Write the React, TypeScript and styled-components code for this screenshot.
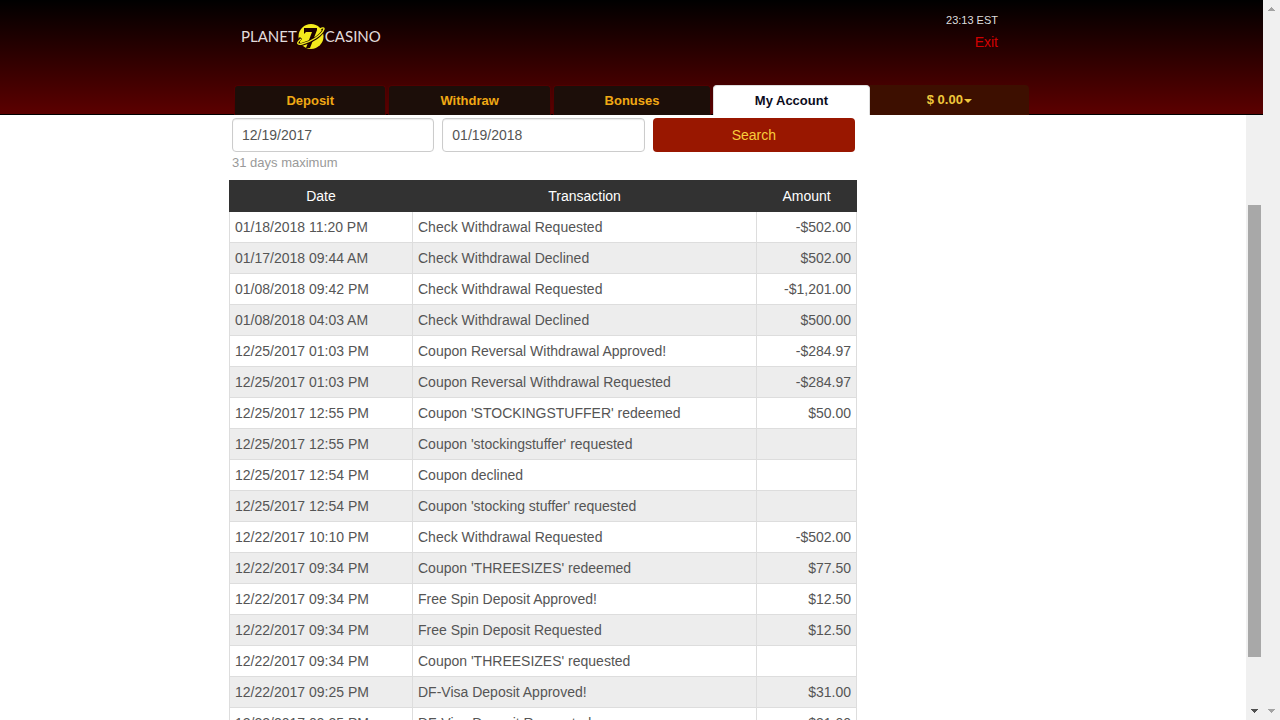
import React, { useState } from "react";
import styled, { createGlobalStyle } from "styled-components";

const GlobalStyle = createGlobalStyle`
  *, *::before, *::after { box-sizing: border-box; }
  body {
    margin: 0;
    background: #fff;
    color: #555;
    font-family: Arial, "Liberation Sans", sans-serif;
    font-size: 14px;
    line-height: 20px;
  }
`;

const Page = styled.div`
  display: flex;
  height: 100vh;
  overflow: hidden;
`;

const Frame = styled.div`
  display: flex;
  flex: 1;
  flex-direction: column;
  min-width: 0;
`;

const Header = styled.header`
  background: linear-gradient(#000, #5c0000);
  border-bottom: 1px solid #000;
`;

const HeaderInner = styled.div`
  max-width: 805px;
  margin: 0 auto;
`;

const TopRow = styled.div`
  display: flex;
  justify-content: space-between;
  height: 85px;
  padding: 10px 36px 0 12px;
`;

const Brand = styled.div`
  display: flex;
  align-items: center;
  height: 52px;
  color: #e2dcdc;
  font-family: Lato, sans-serif;
  font-size: 15px;
`;

const Globe = styled.svg`
  display: block;
  width: 30px;
  height: 28px;
  margin: 0 -1px;
`;

const Status = styled.div`
  text-align: right;
`;

const Clock = styled.div`
  color: #ddd;
  font-size: 11px;
`;

const ExitLink = styled.a`
  display: block;
  margin-top: 2px;
  color: #d00000;
  text-decoration: none;
`;

const Tabs = styled.nav`
  display: flex;
  gap: 2px;
  height: 30px;
  margin-bottom: -1px;
  padding: 0 5px;
`;

const Tab = styled.a<{ $grow: number; $active?: boolean }>`
  flex: ${(p) => p.$grow} 1 0;
  border: 1px solid ${(p) => (p.$active ? "#ddd" : "#500000")};
  border-bottom: 0;
  border-radius: 4px 4px 0 0;
  background: ${(p) => (p.$active ? "#fff" : "#1c0e09")};
  color: ${(p) => (p.$active ? "#0b0b1c" : "#f0a814")};
  font-size: 13px;
  font-weight: bold;
  line-height: 30px;
  text-align: center;
  text-decoration: none;
`;

const Balance = styled.button`
  display: flex;
  flex: 161 1 0;
  align-items: center;
  justify-content: center;
  gap: 1px;
  margin-left: -2px;
  padding: 0 0 2px;
  border: 0;
  border-radius: 0 4px 0 0;
  background: #3d0f00;
  color: #f0c83c;
  font: bold 13px Arial, "Liberation Sans", sans-serif;
`;

const Caret = styled.span`
  margin-top: 3px;
  border: 4px solid transparent;
  border-top-color: currentColor;
  border-bottom: 0;
`;

const Body = styled.div`
  display: flex;
  flex: 1;
  min-height: 0;
`;

const Scroller = styled.main`
  flex: 1;
  min-width: 0;
  overflow: hidden;
`;

const Content = styled.div`
  max-width: 788px;
  margin: 0 auto;
`;

const History = styled.section`
  max-width: 628px;
`;

const Filters = styled.form`
  display: grid;
  grid-template-columns: repeat(3, 1fr);
  column-gap: 8px;
  row-gap: 1px;
  padding: 3px 2px 7px 3px;
`;

const DateInput = styled.input`
  width: 100%;
  height: 34px;
  padding: 6px 9px;
  border: 1px solid #ccc;
  border-radius: 4px;
  background: #fff;
  box-shadow: inset 0 1px 1px rgba(0, 0, 0, 0.08);
  color: #555;
  font: 14px Arial, "Liberation Sans", sans-serif;
`;

const SearchButton = styled.button`
  height: 34px;
  border: 0;
  border-radius: 4px;
  background: #991700;
  color: #f8cc3c;
  font: 14px Arial, "Liberation Sans", sans-serif;
`;

const Hint = styled.p`
  grid-column: 1 / -1;
  margin: 0;
  color: #999;
  font-size: 13px;
`;

const Table = styled.table`
  width: 100%;
  border-collapse: collapse;
  table-layout: fixed;
`;

const HeadCell = styled.th<{ $width?: number }>`
  width: ${(p) => (p.$width ? `${p.$width}px` : "auto")};
  height: 31px;
  padding: 5px;
  border: 1px solid #323232;
  background: #323232;
  color: #fff;
  font-weight: normal;
`;

const Row = styled.tr`
  &:nth-child(even) { background: #ededed; }
`;

const Cell = styled.td<{ $right?: boolean }>`
  height: 31px;
  padding: 5px;
  border: 1px solid #ddd;
  text-align: ${(p) => (p.$right ? "right" : "left")};
  white-space: nowrap;
`;

const Track = styled.div<{ $thumb?: boolean }>`
  display: flex;
  flex: 0 0 17px;
  flex-direction: column;
  align-items: center;
  justify-content: space-between;
  padding: ${(p) => (p.$thumb ? "90px 0 7px" : "7px 0")};
  background: #f0f0f0;
`;

const Thumb = styled.div`
  flex: 0 0 89%;
  width: 13px;
  background: #a8a8a8;
`;

const Arrow = styled.svg<{ $dark?: boolean }>`
  display: block;
  width: 7px;
  height: 4px;
  fill: ${(p) => (p.$dark ? "#505050" : "#a3a3a3")};
  shape-rendering: crispEdges;
`;

const tabs = [
  { label: "Deposit", grow: 152 },
  { label: "Withdraw", grow: 162 },
  { label: "Bonuses", grow: 158 },
  { label: "My Account", grow: 156, active: true },
];

const rows: [string, string, string][] = [
  ["01/18/2018 11:20 PM", "Check Withdrawal Requested", "-$502.00"],
  ["01/17/2018 09:44 AM", "Check Withdrawal Declined", "$502.00"],
  ["01/08/2018 09:42 PM", "Check Withdrawal Requested", "-$1,201.00"],
  ["01/08/2018 04:03 AM", "Check Withdrawal Declined", "$500.00"],
  ["12/25/2017 01:03 PM", "Coupon Reversal Withdrawal Approved!", "-$284.97"],
  ["12/25/2017 01:03 PM", "Coupon Reversal Withdrawal Requested", "-$284.97"],
  ["12/25/2017 12:55 PM", "Coupon 'STOCKINGSTUFFER' redeemed", "$50.00"],
  ["12/25/2017 12:55 PM", "Coupon 'stockingstuffer' requested", ""],
  ["12/25/2017 12:54 PM", "Coupon declined", ""],
  ["12/25/2017 12:54 PM", "Coupon 'stocking stuffer' requested", ""],
  ["12/22/2017 10:10 PM", "Check Withdrawal Requested", "-$502.00"],
  ["12/22/2017 09:34 PM", "Coupon 'THREESIZES' redeemed", "$77.50"],
  ["12/22/2017 09:34 PM", "Free Spin Deposit Approved!", "$12.50"],
  ["12/22/2017 09:34 PM", "Free Spin Deposit Requested", "$12.50"],
  ["12/22/2017 09:34 PM", "Coupon 'THREESIZES' requested", ""],
  ["12/22/2017 09:25 PM", "DF-Visa Deposit Approved!", "$31.00"],
  ["12/22/2017 09:25 PM", "DF-Visa Deposit Requested", "$31.00"],
];

function ScrollArrow({ up, dark }: { up?: boolean; dark?: boolean }) {
  return (
    <Arrow viewBox="0 0 7 4" $dark={dark} aria-hidden="true">
      <path d={up ? "M0 4V3h1V2h1V1h1V0h1v1h1v1h1v1h1v1z" : "M0 0v1h1v1h1v1h1v1h1V3h1V2h1V1h1V0z"} />
    </Arrow>
  );
}

function Logo() {
  return (
    <Brand>
      <span>PLANET</span>
      <Globe viewBox="0 0 30 28" aria-hidden="true">
        <circle cx="15" cy="14.5" r="12.5" fill="#f3ea1c" />
        <path d="M8 6h13v2l-7 18h-4l6-16h-6l-2 2z" fill="#1a0000" />
        <path d="M5 16C0 21 1 24 7 22c9-2 19-9 21-15" fill="none" stroke="#1a0000" strokeWidth="3" />
        <path d="M5 17C0 21 1 23 6 22 15 20 26 13 28 7c0-2-2-1-4 0" fill="none" stroke="#f3ea1c" strokeWidth="1.4" />
      </Globe>
      <span>CASINO</span>
    </Brand>
  );
}

export default function App() {
  const [from, setFrom] = useState("12/19/2017");
  const [to, setTo] = useState("01/19/2018");
  return (
    <Page>
      <GlobalStyle />
      <Frame>
        <Header>
          <HeaderInner>
            <TopRow>
              <Logo />
              <Status>
                <Clock>23:13 EST</Clock>
                <ExitLink href="#exit">Exit</ExitLink>
              </Status>
            </TopRow>
            <Tabs>
              {tabs.map((t) => (
                <Tab key={t.label} href="#" $grow={t.grow} $active={t.active}>{t.label}</Tab>
              ))}
              <Balance type="button">$ 0.00<Caret /></Balance>
            </Tabs>
          </HeaderInner>
        </Header>
        <Body>
          <Scroller>
            <Content>
              <History>
                <Filters onSubmit={(e) => e.preventDefault()}>
                  <DateInput aria-label="From date" value={from} onChange={(e) => setFrom(e.target.value)} />
                  <DateInput aria-label="To date" value={to} onChange={(e) => setTo(e.target.value)} />
                  <SearchButton type="submit">Search</SearchButton>
                  <Hint>31 days maximum</Hint>
                </Filters>
                <Table>
                  <thead>
                    <tr>
                      <HeadCell $width={183}>Date</HeadCell>
                      <HeadCell>Transaction</HeadCell>
                      <HeadCell $width={100}>Amount</HeadCell>
                    </tr>
                  </thead>
                  <tbody>
                    {rows.map(([date, text, amount], i) => (
                      <Row key={i}>
                        <Cell>{date}</Cell>
                        <Cell>{text}</Cell>
                        <Cell $right>{amount}</Cell>
                      </Row>
                    ))}
                  </tbody>
                </Table>
              </History>
            </Content>
          </Scroller>
          <Track $thumb>
            <Thumb />
            <ScrollArrow dark />
          </Track>
        </Body>
      </Frame>
      <Track>
        <ScrollArrow up />
        <ScrollArrow />
      </Track>
    </Page>
  );
}
